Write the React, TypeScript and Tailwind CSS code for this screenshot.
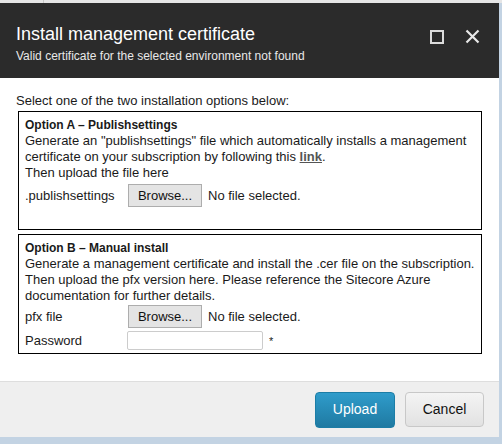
export default function App() {
  return (
    <div className="w-[502px] h-[444px] bg-[#c3d3e3] flex flex-col overflow-hidden font-['Liberation_Sans',Arial,sans-serif]">
      {/* top strip of the window behind */}
      <div className="h-[3px] bg-[#e6e6e6] flex">
        <div className="w-[44px] border-r border-[#c8c8c8]" />
      </div>
      <div className="w-[499px] flex flex-col bg-white">
        {/* Header */}
        <div className="h-[75px] bg-[#2b2b2b] flex items-start justify-between pl-[16px] pr-[19px]">
          <div className="pt-[21px]">
            <h1 className="text-[18px] leading-[21px] text-white">Install management certificate</h1>
            <p className="text-[12px] leading-[14px] mt-[4px] text-[#e8e8e8]">
              Valid certificate for the selected environment not found
            </p>
          </div>
          <div className="flex items-center gap-[21px] pt-[26px]">
            <div className="w-[14px] h-[14px] border-2 border-[#dcdcdc]" />
            <svg width="15" height="15" viewBox="0 0 15 15">
              <path d="M1.5 1.5l12 12M13.5 1.5l-12 12" stroke="#e8e8e8" strokeWidth="2.2" />
            </svg>
          </div>
        </div>

        {/* Body */}
        <div className="h-[303px] pt-[15px] pl-[16px] text-[13px] leading-[16px] text-[#1a1a1a]">
          <p className="mb-[2px]">Select one of the two installation options below:</p>
          <div className="ml-[2px] w-[464px] border border-black px-[6px] pt-[5px] h-[119px]">
            <div className="font-bold text-[12px]">Option A – Publishsettings</div>
            <p>
              Generate an "publishsettings" file which automatically installs a management
              <br />
              certificate on your subscription by following this{' '}
              <span className="underline font-bold text-[#555]">link</span>.
            </p>
            <p>Then upload the file here</p>
            <div className="flex items-center mt-[3px]">
              <span className="w-[103px]">.publishsettings</span>
              <button className="h-[23px] w-[74px] border border-[#adadad] bg-[#e4e4e4] text-[13px] text-[#111]">Browse...</button>
              <span className="ml-[6px] text-[13px]">No file selected.</span>
            </div>
          </div>
          <div className="ml-[2px] mt-[4px] w-[464px] border border-black px-[6px] pt-[5px] h-[120px]">
            <div className="font-bold text-[12px]">Option B – Manual install</div>
            <p>
              Generate a management certificate and install the .cer file on the subscription.
              <br />
              Then upload the pfx version here. Please reference the Sitecore Azure
              <br />
              documentation for further details.
            </p>
            <div className="flex items-center mt-[1px]">
              <span className="w-[103px]">pfx file</span>
              <button className="h-[23px] w-[74px] border border-[#adadad] bg-[#e4e4e4] text-[13px] text-[#111]">Browse...</button>
              <span className="ml-[6px] text-[13px]">No file selected.</span>
            </div>
            <div className="flex items-center mt-[3px]">
              <span className="w-[102px]">Password</span>
              <div className="h-[19px] w-[136px] border border-[#ccc] rounded-[2px] bg-white" />
              <span className="ml-[6px] text-[11px]">*</span>
            </div>
          </div>
        </div>

        {/* Footer */}
        <div className="h-[56px] bg-[#efefef] border-t border-[#dedede] flex items-center justify-end gap-[10px] pr-[15px]">
          <button className="w-[80px] h-[36px] rounded-[4px] border border-[#1c7da6] bg-gradient-to-b from-[#2f9ccb] to-[#1f7aa2] text-white text-[14px]">
            Upload
          </button>
          <button className="w-[79px] h-[35px] rounded-[4px] border border-[#c8c8c8] bg-gradient-to-b from-[#f4f4f4] to-[#e2e2e2] text-[#111] text-[14px]">
            Cancel
          </button>
        </div>
      </div>
    </div>
  )
}
